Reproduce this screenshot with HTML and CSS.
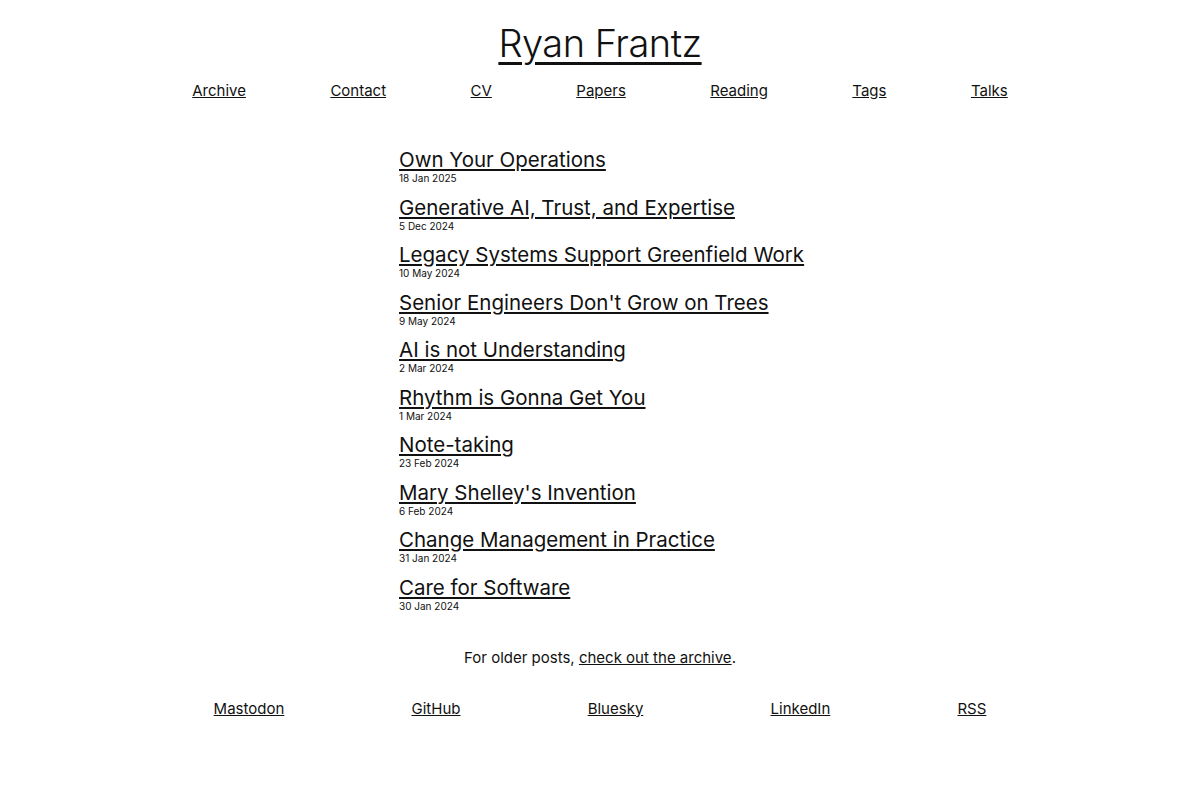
FILE: index.html
```html
<!DOCTYPE html>
<html lang="en">
<head>
    <meta charset="UTF-8">
    <meta name="viewport" content="width=device-width, initial-scale=1.0">
    <title>Ryan Frantz</title>
    <link rel="stylesheet" href="styles.css">
</head>
<body>
    <header class="site-header">
        <h1 class="site-title"><a href="#">Ryan Frantz</a></h1>
        <nav class="site-nav">
            <a href="#">Archive</a>
            <a href="#">Contact</a>
            <a href="#">CV</a>
            <a href="#">Papers</a>
            <a href="#">Reading</a>
            <a href="#">Tags</a>
            <a href="#">Talks</a>
        </nav>
    </header>

    <!-- Recent posts -->
    <main class="posts">
        <article class="post">
            <h2><a href="#">Own Your Operations</a></h2>
            <div class="post-date">18 Jan 2025</div>
        </article>
        <article class="post">
            <h2><a href="#">Generative AI, Trust, and Expertise</a></h2>
            <div class="post-date">5 Dec 2024</div>
        </article>
        <article class="post">
            <h2><a href="#">Legacy Systems Support Greenfield Work</a></h2>
            <div class="post-date">10 May 2024</div>
        </article>
        <article class="post">
            <h2><a href="#">Senior Engineers Don't Grow on Trees</a></h2>
            <div class="post-date">9 May 2024</div>
        </article>
        <article class="post">
            <h2><a href="#">AI is not Understanding</a></h2>
            <div class="post-date">2 Mar 2024</div>
        </article>
        <article class="post">
            <h2><a href="#">Rhythm is Gonna Get You</a></h2>
            <div class="post-date">1 Mar 2024</div>
        </article>
        <article class="post">
            <h2><a href="#">Note-taking</a></h2>
            <div class="post-date">23 Feb 2024</div>
        </article>
        <article class="post">
            <h2><a href="#">Mary Shelley's Invention</a></h2>
            <div class="post-date">6 Feb 2024</div>
        </article>
        <article class="post">
            <h2><a href="#">Change Management in Practice</a></h2>
            <div class="post-date">31 Jan 2024</div>
        </article>
        <article class="post">
            <h2><a href="#">Care for Software</a></h2>
            <div class="post-date">30 Jan 2024</div>
        </article>
    </main>

    <p class="older">For older posts, <a href="#">check out the archive</a>.</p>

    <footer class="site-footer">
        <a href="#">Mastodon</a>
        <a href="#">GitHub</a>
        <a href="#">Bluesky</a>
        <a href="#">LinkedIn</a>
        <a href="#">RSS</a>
    </footer>
</body>
</html>
```

FILE: styles.css
```css
body {
    margin: 0;
    font-family: Inter, "Noto Sans", sans-serif;
    color: #111;
    background: #fff;
}
a {
    color: #111;
}
/* Header and nav */
.site-header {
    text-align: center;
    padding-top: 20px;
}
.site-title {
    margin: 0;
    font-size: 38px;
    font-weight: 300;
    line-height: 46px;
    letter-spacing: -0.5px;
}
.site-title a {
    text-decoration-thickness: 3px;
    text-underline-offset: 5px;
}
.site-nav, .site-footer {
    max-width: 900px;
    margin: 0 auto;
    display: flex;
    justify-content: space-around;
    font-size: 15px;
}
.site-nav {
    margin-top: 15px;
}
/* Post list */
.posts {
    width: 402px;
    margin: 48px auto 0;
}
.post {
    margin-bottom: 11.5px;
}
.post h2 {
    margin: 0;
    font-size: 20.5px;
    font-weight: 400;
    line-height: 24px;
    white-space: nowrap;
}
.post-date {
    font-size: 10px;
    line-height: 12px;
}
.older {
    text-align: center;
    font-size: 15px;
    margin: 36px 0 0;
}
.site-footer {
    margin-top: 32px;
}
```
